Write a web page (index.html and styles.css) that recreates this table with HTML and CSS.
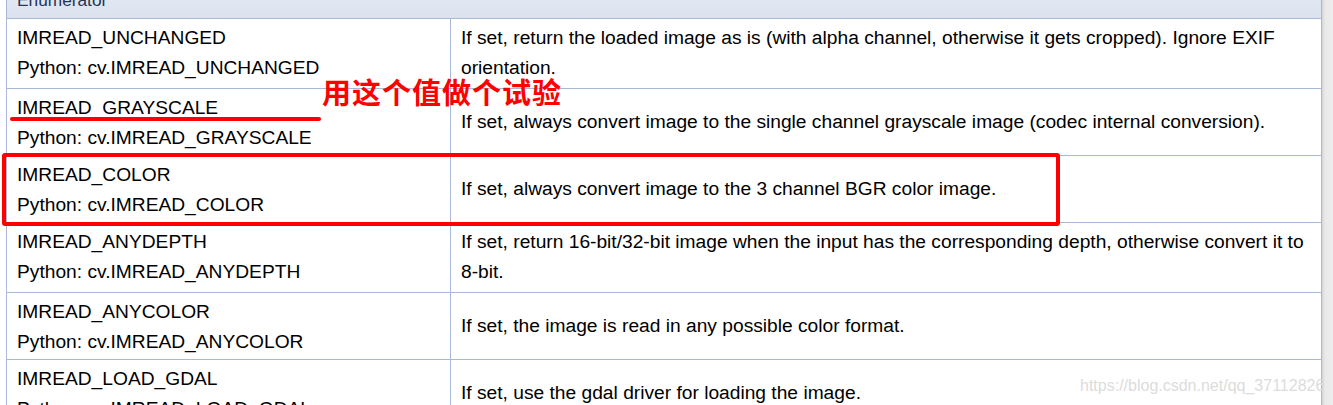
FILE: index.html
```html
<!DOCTYPE html>
<html lang="en">
<head>
    <meta charset="UTF-8">
    <title>ImreadModes</title>
    <link rel="stylesheet" href="styles.css">
</head>
<body>
    <div class="page">
        <div class="doc">
            <table class="fieldtable">
                <colgroup>
                    <col class="col-name">
                    <col>
                </colgroup>
                <tr>
                    <th colspan="2">Enumerator</th>
                </tr>
                <tr>
                    <td class="fieldname">IMREAD_UNCHANGED<br>Python: cv.IMREAD_UNCHANGED</td>
                    <td class="fielddoc">If set, return the loaded image as is (with alpha channel, otherwise it gets cropped). Ignore EXIF orientation.</td>
                </tr>
                <tr>
                    <td class="fieldname">IMREAD_GRAYSCALE<br>Python: cv.IMREAD_GRAYSCALE</td>
                    <td class="fielddoc">If set, always convert image to the single channel grayscale image (codec internal conversion).</td>
                </tr>
                <tr>
                    <td class="fieldname">IMREAD_COLOR<br>Python: cv.IMREAD_COLOR</td>
                    <td class="fielddoc">If set, always convert image to the 3 channel BGR color image.</td>
                </tr>
                <tr>
                    <td class="fieldname">IMREAD_ANYDEPTH<br>Python: cv.IMREAD_ANYDEPTH</td>
                    <td class="fielddoc">If set, return 16-bit/32-bit image when the input has the corresponding depth, otherwise convert it to 8-bit.</td>
                </tr>
                <tr>
                    <td class="fieldname">IMREAD_ANYCOLOR<br>Python: cv.IMREAD_ANYCOLOR</td>
                    <td class="fielddoc">If set, the image is read in any possible color format.</td>
                </tr>
                <tr>
                    <td class="fieldname">IMREAD_LOAD_GDAL<br>Python: cv.IMREAD_LOAD_GDAL</td>
                    <td class="fielddoc">If set, use the gdal driver for loading the image.</td>
                </tr>
            </table>

            <!-- hand-drawn notes on top of the screenshot -->
            <div class="note-underline"></div>
            <div class="note-text">用这个值做个试验</div>
            <div class="note-box"></div>
            <div class="watermark">https://blog.csdn.net/qq_37112826</div>
        </div>
        <div class="gutter"></div>
    </div>
</body>
</html>
```

FILE: styles.css
```css
* {
    margin: 0;
    padding: 0;
    box-sizing: border-box;
}

body {
    background-color: #ffffff;
    font-family: 'Liberation Sans', Arial, sans-serif;
    color: #000000;
}

.page {
    display: flex;
    height: 405px;
    overflow: hidden;
}

.doc {
    flex: 1;
    position: relative;
    padding-left: 6px;
    overflow: hidden;
}

.gutter {
    width: 11px;
    background: linear-gradient(to right, #d4d4d4, #e9e9e9 3px, #eeeeee);
}

.fieldtable {
    width: 100%;
    margin-top: -20px;
    border: 1px solid #a8b8d9;
    border-collapse: collapse;
    table-layout: fixed;
    font-size: 19.2px;
    line-height: 30px;
}

.col-name {
    width: 444px;
}

.fieldtable th {
    text-align: left;
    font-weight: 400;
    font-size: 17.3px;
    color: #253555;
    padding: 4px 10px 3px;
    background: linear-gradient(#e8ecf5, #dbe2ee);
    border-bottom: 1px solid #a8b8d9;
}

.fieldtable td {
    border-bottom: 1px solid #a8b8d9;
}

.fieldname {
    vertical-align: top;
    padding: 4px 10px 2px;
    border-right: 1px solid #a8b8d9;
    white-space: nowrap;
}

.fielddoc {
    vertical-align: middle;
    padding: 4px 10px 5px;
}

.note-underline {
    position: absolute;
    left: 10px;
    top: 117px;
    width: 311px;
    height: 4px;
    border-radius: 2px;
    background: #ff0000;
}

.note-text {
    position: absolute;
    left: 322px;
    top: 77px;
    font-family: 'Noto Sans CJK SC', sans-serif;
    font-size: 29px;
    font-weight: 700;
    line-height: 1;
    letter-spacing: 1px;
    color: #ff0000;
}

.note-box {
    position: absolute;
    left: 2px;
    top: 153px;
    width: 1058px;
    height: 73px;
    border: 4px solid #ff0000;
    border-radius: 3px;
}

.watermark {
    position: absolute;
    left: 1080px;
    top: 377px;
    font-size: 16px;
    color: #dcdcdc;
    white-space: nowrap;
}
```
